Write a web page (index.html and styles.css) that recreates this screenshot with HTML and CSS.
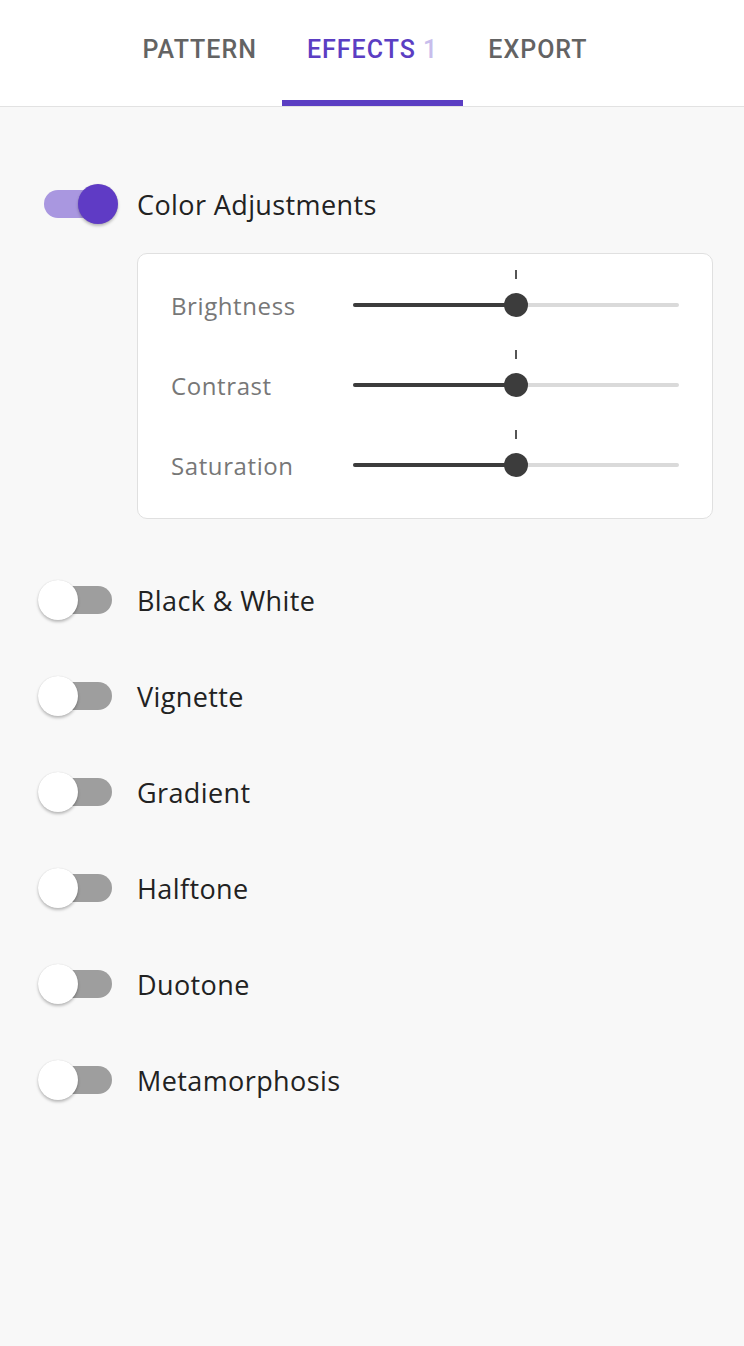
FILE: index.html
```html
<!DOCTYPE html>
<html>
<head>
<meta charset="utf-8">
<link rel="stylesheet" href="styles.css">
</head>
<body>
<header class="tabs">
  <div class="tab">PATTERN</div>
  <div class="tab active">EFFECTS <span class="count">1</span></div>
  <div class="tab">EXPORT</div>
</header>
<main class="main">
  <div class="row">
    <div class="toggle on"><span class="track"></span><span class="thumb"></span></div>
    <span class="label">Color Adjustments</span>
  </div>
  <div class="panel">
    <div class="srow">
      <span class="slabel">Brightness</span>
      <div class="slider"><span class="fill" style="width:50%"></span><span class="tick" style="left:50%"></span><span class="knob" style="left:50%"></span></div>
    </div>
    <div class="srow">
      <span class="slabel">Contrast</span>
      <div class="slider"><span class="fill" style="width:50%"></span><span class="tick" style="left:50%"></span><span class="knob" style="left:50%"></span></div>
    </div>
    <div class="srow">
      <span class="slabel">Saturation</span>
      <div class="slider"><span class="fill" style="width:50%"></span><span class="tick" style="left:50%"></span><span class="knob" style="left:50%"></span></div>
    </div>
  </div>
  <div class="list">
    <div class="row"><div class="toggle"><span class="track"></span><span class="thumb"></span></div><span class="label">Black &amp; White</span></div>
    <div class="row"><div class="toggle"><span class="track"></span><span class="thumb"></span></div><span class="label">Vignette</span></div>
    <div class="row"><div class="toggle"><span class="track"></span><span class="thumb"></span></div><span class="label">Gradient</span></div>
    <div class="row"><div class="toggle"><span class="track"></span><span class="thumb"></span></div><span class="label">Halftone</span></div>
    <div class="row"><div class="toggle"><span class="track"></span><span class="thumb"></span></div><span class="label">Duotone</span></div>
    <div class="row"><div class="toggle"><span class="track"></span><span class="thumb"></span></div><span class="label">Metamorphosis</span></div>
  </div>
</main>
</body>
</html>
```

FILE: styles.css
```css
* { box-sizing: border-box; }
html, body { margin: 0; padding: 0; }
body {
  background: #f8f8f8;
  font-family: "Open Sans", "Noto Sans", sans-serif;
  width: 744px;
  min-height: 1346px;
}
.tabs {
  background: #fff;
  height: 107px;
  border-bottom: 1px solid #e2e2e2;
  display: flex;
  justify-content: center;
  padding-right: 14px;
}
.tab {
  font-family: Roboto, sans-serif;
  font-weight: 500;
  font-size: 25px;
  letter-spacing: 1px;
  color: #636363;
  padding: 35px 25px 0;
  height: 106px;
}
.tab.active {
  color: #5b3ec3;
  border-bottom: 6px solid #5b3ec3;
}
.count { color: #c8bdec; }
.main {
  padding: 77px 31px 0 38px;
}
.row {
  display: flex;
  align-items: center;
  height: 40px;
  gap: 19px;
}
.toggle {
  position: relative;
  width: 80px;
  height: 40px;
  flex: none;
}
.track {
  position: absolute;
  left: 6px;
  top: 6px;
  width: 68px;
  height: 28px;
  border-radius: 14px;
  background: #9e9e9e;
}
.thumb {
  position: absolute;
  left: 0;
  top: 0;
  width: 40px;
  height: 40px;
  border-radius: 50%;
  background: #fff;
  box-shadow: 0 2px 3px rgba(0,0,0,0.25), 0 0 1px rgba(0,0,0,0.15);
}
.toggle.on .track { background: #a997e0; }
.toggle.on .thumb { left: 40px; background: #5f3bc5; }
.label {
  font-size: 27px;
  letter-spacing: 0.4px;
  color: #222;
}
.panel {
  margin: 29px 0 0 99px;
  background: #fff;
  border: 1px solid #e0e0e0;
  border-radius: 10px;
  padding: 11px 33px 13px 33px;
}
.srow {
  display: flex;
  align-items: center;
  height: 80px;
}
.slabel {
  width: 182px;
  flex: none;
  font-size: 24px;
  letter-spacing: 0.6px;
  color: #777;
}
.slider {
  position: relative;
  flex: 1;
  height: 4px;
  border-radius: 2px;
  background: #dadada;
}
.fill {
  position: absolute;
  left: 0;
  top: 0;
  height: 4px;
  border-radius: 2px;
  background: #3c3c3c;
}
.tick {
  position: absolute;
  top: -33px;
  width: 2px;
  height: 9px;
  margin-left: -1px;
  background: #555;
}
.knob {
  position: absolute;
  top: -10px;
  width: 24px;
  height: 24px;
  margin-left: -12px;
  border-radius: 50%;
  background: #3c3c3c;
}
.list {
  margin-top: 61px;
  display: flex;
  flex-direction: column;
  gap: 56px;
}
```
